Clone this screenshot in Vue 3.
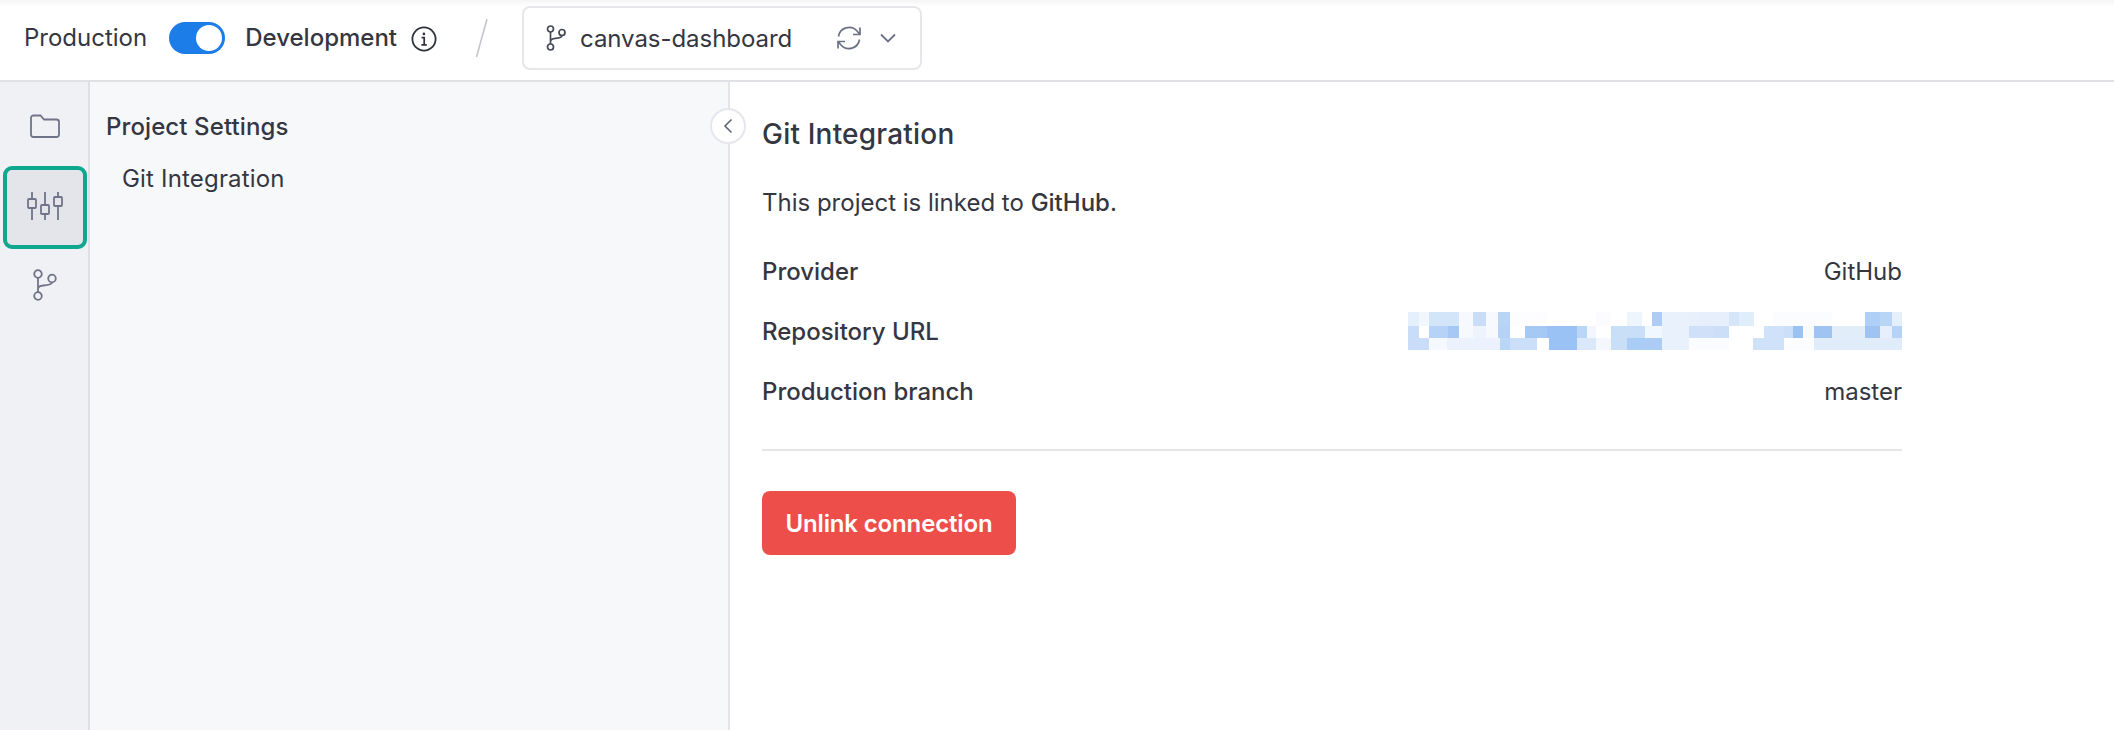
<script setup>
const K = 2.958
const raw = [
  [14, [[53,85,'#e6effc'],[85,115,'#f2f7fe'],[115,204,'#d3e5f9'],[204,246,'#f6faff'],[246,284,'#c9ddf8'],[284,320,'#f6f9fe'],[320,355,'#b9d5f6'],[355,463,'#fdfdff'],[463,610,'#ffffff'],[610,655,'#fcfcff'],[655,701,'#ffffff'],[701,745,'#eef5fd'],[745,775,'#ffffff'],[775,805,'#aeccf6'],[805,884,'#e9f1fc'],[884,912,'#e8f0fb'],[912,1003,'#e6effb'],[1003,1033,'#d5e6f9'],[1033,1077,'#e0edfa'],[1077,1133,'#ffffff'],[1133,1308,'#fafcff'],[1308,1405,'#ffffff'],[1405,1450,'#b0cff6'],[1450,1485,'#b9d5f6'],[1485,1515,'#e6effc']]],
  [12, [[53,85,'#c9ddf8'],[85,115,'#ffffff'],[115,171,'#b6d2f6'],[171,204,'#a5c8f4'],[204,246,'#f6faff'],[246,284,'#edf4fd'],[284,320,'#f6f9fe'],[320,355,'#b6d2f6'],[355,399,'#ffffff'],[399,463,'#a5c8f4'],[463,553,'#9ac2f4'],[553,583,'#bad6f7'],[583,610,'#f3f6fe'],[610,655,'#ffffff'],[655,754,'#c9dff8'],[754,805,'#f0f7fe'],[805,884,'#e9f1fc'],[884,955,'#cfe0f8'],[955,1003,'#cbdff9'],[1003,1106,'#ffffff'],[1106,1165,'#cfe2f9'],[1165,1191,'#cbdff9'],[1191,1222,'#9ac2f2'],[1222,1254,'#f6fafd'],[1254,1308,'#a0c4f2'],[1308,1405,'#e2edfa'],[1405,1450,'#a0c4f2'],[1450,1485,'#e6effb'],[1485,1515,'#b6d2f6']]],
  [12, [[53,115,'#c9ddf8'],[115,169,'#f5f9fe'],[169,325,'#ebf2fd'],[325,355,'#bad6f7'],[355,435,'#cbdff9'],[435,470,'#ffffff'],[470,553,'#9ac2f4'],[553,610,'#dae8fa'],[610,654,'#f4f7fe'],[654,701,'#c9dff8'],[701,754,'#aacdf6'],[754,805,'#acccf6'],[805,884,'#e9f1fc'],[884,1003,'#fafcff'],[1003,1074,'#ffffff'],[1074,1165,'#cfe2f9'],[1165,1254,'#fbfdff'],[1254,1515,'#e0ecfa']]]
]
const mosaic = raw.map(([h, cells]) => ({
  h,
  cells: cells.map(([a, b, c]) => ({ w: (b - a) / K, c }))
}))
</script>

<template>
  <div class="app">
    <header class="top">
      <span class="env">Production</span>
      <span class="toggle"><span class="knob"></span></span>
      <span class="env strong">Development</span>
      <svg class="info" viewBox="0 0 26 26" width="26" height="26" fill="none" stroke="#2f323c" stroke-width="1.8">
        <circle cx="13" cy="13" r="11.6" />
        <path d="M10.6 11.6h2.6v7M10.4 18.8h5.4" stroke-width="1.7" />
        <circle cx="12.9" cy="7.9" r="1.3" fill="#2f323c" stroke="none" />
      </svg>
      <svg class="slash" viewBox="0 0 13 40" width="13" height="40" fill="none" stroke="#c4c6ce" stroke-width="1.6">
        <path d="M12 1 1.5 39" />
      </svg>
      <div class="branch">
        <svg viewBox="0 0 20 26" width="20" height="26" fill="none" stroke="#444957" stroke-width="1.7">
          <circle cx="4.5" cy="4" r="3" />
          <circle cx="4.5" cy="22" r="3" />
          <circle cx="16" cy="7.5" r="3" />
          <path d="M4.5 7v12M4.5 16.5c0-2.5 2-3 5-3.2 3.500-.2 6.500-.8 6.500-2.800" />
        </svg>
        <span class="branch-name">canvas-dashboard</span>
        <svg class="sync" viewBox="0 0 26 26" width="26" height="26" fill="none" stroke="#6b7186" stroke-width="1.7">
          <path d="M2.500 11.500A10.700 10.700 0 0 1 21 6l3 3.500M24 2.500v7h-7" />
          <path d="M23.500 14.500A10.700 10.700 0 0 1 5 20l-3-3.500M2 23.500v-7h7" />
        </svg>
        <svg class="chev" viewBox="0 0 16 10" width="16" height="10" fill="none" stroke="#6b7186" stroke-width="1.8">
          <path d="M1 1.500 8 8.500l7-7" />
        </svg>
      </div>
    </header>

    <div class="body">
      <nav class="rail">
        <div class="rail-item">
          <svg viewBox="0 0 30 24" width="30" height="24" fill="none" stroke="#6f7488" stroke-width="1.8">
            <path d="M1 4a2.500 2.500 0 0 1 2.500-2.500h7l3.500 4h12.500A2.500 2.500 0 0 1 29 8v12.500a2.500 2.500 0 0 1-2.500 2.500h-23A2.500 2.500 0 0 1 1 20.500z" />
          </svg>
        </div>
        <div class="rail-item active">
          <svg viewBox="0 0 36 30" width="36" height="30" fill="none" stroke="#6f7488" stroke-width="1.8">
            <path d="M5 1v7M5 17v12M18 1v13M18 24v5M31 1v5M31 15v14" />
            <rect x="1" y="8" width="8" height="9" rx="1" />
            <rect x="14" y="14" width="8" height="9" rx="1" />
            <rect x="27" y="6" width="8" height="9" rx="1" />
          </svg>
        </div>
        <div class="rail-item">
          <svg viewBox="0 0 24 32" width="24" height="32" fill="none" stroke="#6f7488" stroke-width="1.8">
            <circle cx="5" cy="5" r="3.800" />
            <circle cx="5" cy="27" r="3.800" />
            <circle cx="19" cy="9.500" r="3.800" />
            <path d="M5 9v14M5 20c0-2.500 2-3.200 5.500-3.500 4.500-.4 8.500-1.500 8.500-3.300" />
          </svg>
        </div>
      </nav>

      <aside class="panel">
        <h2 class="panel-title">Project Settings</h2>
        <div class="panel-link">Git Integration</div>
        <button class="collapse" type="button" aria-label="Collapse">
          <svg viewBox="0 0 10 16" width="10" height="16" fill="none" stroke="#5f6578" stroke-width="1.6">
            <path d="M8.500 1.500 2 8l6.500 6.500" />
          </svg>
        </button>
      </aside>

      <main class="main">
        <h1 class="title">Git Integration</h1>
        <p class="lead">This project is linked to <strong>GitHub</strong>.</p>
        <div class="row"><span class="label">Provider</span><span class="value">GitHub</span></div>
        <div class="row">
          <span class="label">Repository URL</span>
          <div class="mosaic">
            <div v-for="(r, i) in mosaic" :key="i" class="mosaic-row" :style="{ height: r.h + 'px' }">
              <i v-for="(c, j) in r.cells" :key="j" :style="{ width: c.w + 'px', background: c.c }"></i>
            </div>
          </div>
        </div>
        <div class="row"><span class="label">Production branch</span><span class="value">master</span></div>
        <hr class="rule" />
        <button class="unlink" type="button">Unlink connection</button>
      </main>
    </div>
  </div>
</template>

<style>
html, body { margin: 0; background: #fff; }
</style>

<style scoped>
.app {
  width: 2114px;
  height: 730px;
  display: flex;
  flex-direction: column;
  overflow: hidden;
  font-family: Inter, "Liberation Sans", sans-serif;
  color: #343741;
  font-size: 24px;
}
.top {
  height: 80px;
  box-sizing: content-box;
  flex: none;
  display: flex;
  align-items: center;
  padding-left: 24px;
  border-bottom: 2px solid #e0e1e4;
  background: linear-gradient(#f5f5f6, #fff 7px);
}
.env { line-height: 30px; margin-top: -4px; }
.env.strong { font-weight: 500; margin-left: 20px; }
.toggle {
  width: 56px;
  height: 32px;
  margin-left: 22px;
  margin-top: -4px;
  border-radius: 16px;
  background: #1d7de8;
  display: flex;
  align-items: center;
  justify-content: flex-end;
  padding-right: 3px;
  box-sizing: border-box;
}
.knob { width: 26px; height: 26px; border-radius: 50%; background: #fff; }
.info { margin-left: 14px; margin-top: -2px; }
.slash { margin-left: 38px; margin-top: -4px; }
.branch {
  margin-left: 34px;
  width: 400px;
  height: 64px;
  box-sizing: border-box;
  border: 2px solid #e6e7eb;
  border-radius: 8px;
  display: flex;
  align-items: center;
  padding-left: 22px;
  margin-top: -4px;
}
.branch-name { margin-left: 14px; letter-spacing: -0.05px; }
.sync { margin-left: 44px; }
.chev { margin-left: 18px; }
.body { flex: 1; display: flex; min-height: 0; }
.rail {
  width: 90px;
  box-sizing: border-box;
  flex: none;
  background: #f0f1f5;
  border-right: 2px solid #dfe0e5;
  display: flex;
  flex-direction: column;
  padding-top: 14px;
  padding-left: 3px;
}
.rail-item {
  width: 84px;
  height: 60px;
  display: flex;
  align-items: center;
  justify-content: center;
  box-sizing: border-box;
}
.rail-item.active {
  height: 83px;
  margin-top: 10px;
  margin-bottom: 6px;
  padding-bottom: 3px;
  border: 4px solid #0fa88f;
  border-radius: 9px;
  background: #e4e5ea;
}
.panel {
  position: relative;
  width: 640px;
  box-sizing: border-box;
  flex: none;
  background: #f7f8fa;
  border-right: 2px solid #e4e5e9;
  padding: 31px 0 0 16px;
}
.panel-title { margin: 0; font-size: 24px; font-weight: 500; letter-spacing: 0.1px; line-height: 28px; }
.panel-link { margin: 24px 0 0 16px; line-height: 28px; letter-spacing: 0.18px; }
.collapse {
  position: absolute;
  top: 26px;
  right: -18px;
  width: 36px;
  height: 36px;
  padding: 0;
  border: 2px solid #e6e7ee;
  border-radius: 50%;
  background: #fff;
  display: flex;
  align-items: center;
  justify-content: center;
}
.main { flex: 1; padding: 0 212px 0 32px; }
.title { margin: 35px 0 0; font-size: 28px; font-weight: 500; letter-spacing: 0.2px; line-height: 34px; }
.lead { margin: 37px 0 0; line-height: 30px; }
.lead strong { font-weight: 500; }
.row {
  display: flex;
  justify-content: space-between;
  align-items: center;
  height: 60px;
}
.lead + .row { margin-top: 23px; }
.label { font-weight: 500; }
.mosaic { width: 494px; }
.mosaic-row { display: flex; overflow: hidden; }
.mosaic-row i { display: block; flex: none; }
.rule { margin: 28px 0 0; border: 0; height: 2px; background: #e6e6e8; }
.unlink {
  display: block;
  margin-top: 40px;
  width: 254px;
  height: 64px;
  border: 0;
  border-radius: 8px;
  background: #ee4e4a;
  color: #fff;
  font: 600 24px Inter, "Liberation Sans", sans-serif;
  letter-spacing: -0.15px;
}
</style>
